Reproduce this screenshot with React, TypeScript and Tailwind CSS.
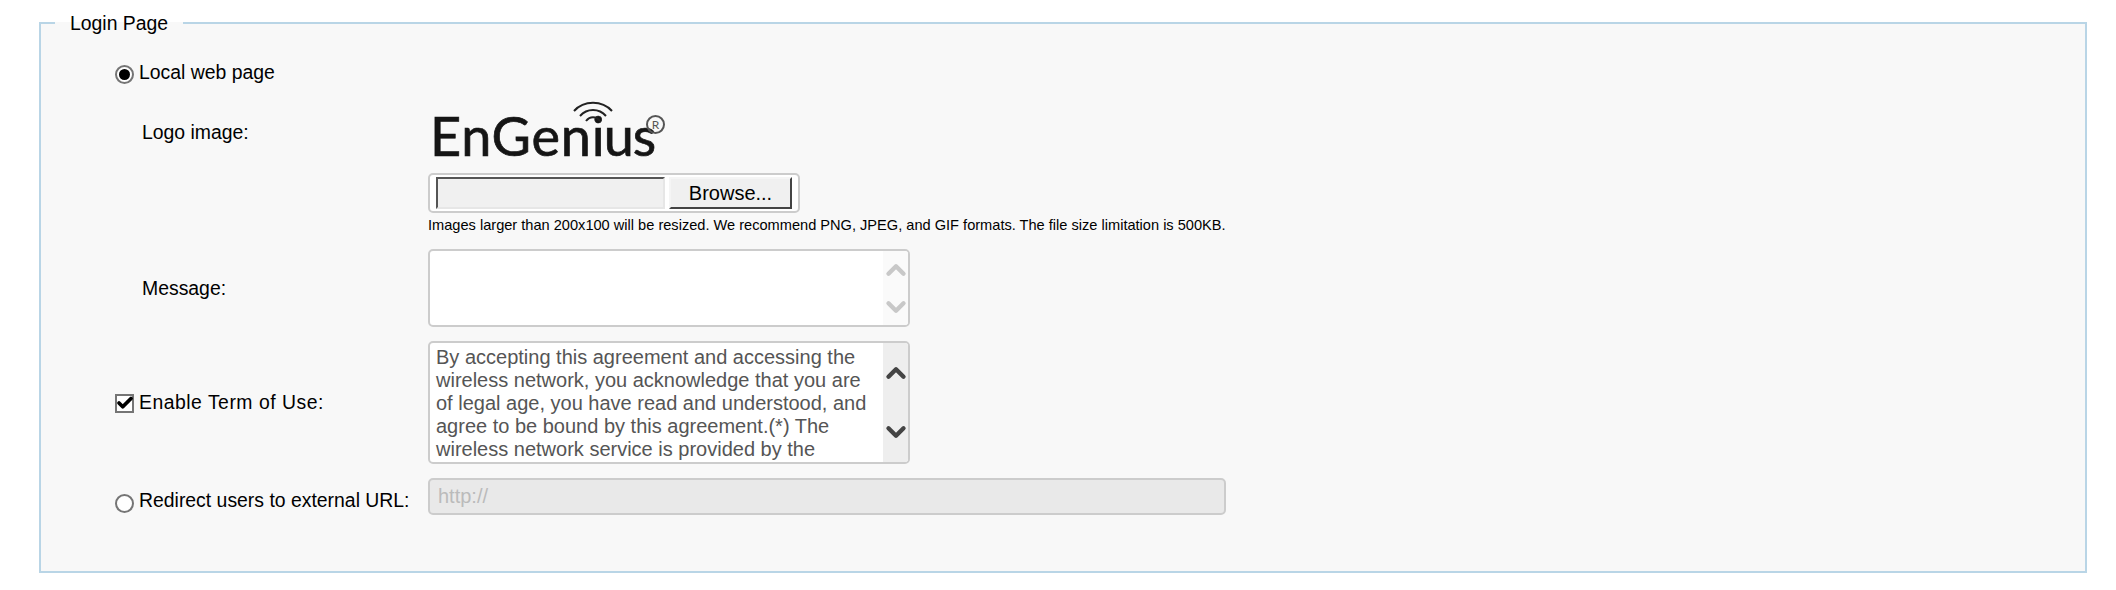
import { FiCheck, FiChevronDown, FiChevronUp } from "react-icons/fi";

const termsText =
    "By accepting this agreement and accessing the wireless network, you acknowledge that you are of legal age, you have read and understood, and agree to be bound by this agreement.(*) The wireless network service is provided by the property owners and is completely at their discretion.";

// SMALL CONTROLS

function RadioMark({ checked }: { checked?: boolean }) {
    return (
        <span className="mt-[3px] flex h-[19px] w-[19px] shrink-0 items-center justify-center rounded-full border-2 border-[#757575] bg-white">
            {checked && <span className="h-[11px] w-[11px] rounded-full bg-black" />}
        </span>
    );
}

function ScrollTextarea({ value, height, active }: { value: string; height: string; active?: boolean }) {
    return (
        <div className={`flex w-[482px] overflow-hidden rounded-[5px] border-2 border-[#cccccc] bg-white ${height}`}>
            <textarea
                readOnly
                value={value}
                className="min-w-0 flex-1 resize-none overflow-hidden px-[6px] pb-0 pt-[3px] text-[20px] leading-[23px] text-[#555555] outline-none"
            />
            <div className={`flex w-[25px] flex-col items-center justify-around ${active ? "bg-[#eeeeee] text-[#444444]" : "bg-[#fafafa] text-[#c8c8c8]"}`}>
                <FiChevronUp className="text-[30px]" strokeWidth={3.5} />
                <FiChevronDown className="text-[30px]" strokeWidth={3.5} />
            </div>
        </div>
    );
}

function EnGeniusLogo() {
    return (
        <div className="relative mt-[11px] h-[66px] w-[240px] font-['Lato',sans-serif] text-[54px] leading-[66px] text-[#151515] [-webkit-text-stroke:0.7px_#151515]">
            <span className="absolute left-[2px] top-[3px] tracking-[0.8px]">
                EnGen<span className="tracking-[-1px]">ius</span>
            </span>
            <span className="absolute left-[218px] top-[15px] flex h-[19px] w-[19px] items-center justify-center rounded-full border-2 border-[#555555] text-[12px] leading-none tracking-normal text-[#555555] [-webkit-text-stroke:0px]">
                R
            </span>
            <svg className="absolute left-[144px] top-0" width="42" height="24" viewBox="0 0 42 24" fill="none" stroke="#222222" strokeWidth="2">
                <path d="M2 11 C12 0 30 0 40 11" />
                <path d="M8 16 C15 8 27 8 34 16" />
                <path d="M14 21 C18 16 24 16 28 21" />
            </svg>
        </div>
    );
}

// MAIN

export default function App() {
    return (
        <div className="h-[590px] w-[2116px] bg-white pl-[39px] pr-[29px] pt-[12px] font-['Liberation_Sans',Arial,sans-serif] text-[19.4px] text-black">
            <fieldset className="h-[561px] border-2 border-[#b9d5e6] bg-[#f8f8f8] pl-[74px]">
                <legend className="-ml-[60px] px-[15px] leading-[22px]">Login Page</legend>

                <label className="mt-[27px] flex h-[24px] items-center gap-[5px]">
                    <RadioMark checked />
                    <span>Local web page</span>
                </label>

                <div className="mt-[4px] grid grid-cols-[313px_1fr] items-center gap-y-[14px]">
                    <div className="self-start pl-[27px] pt-[29px]">Logo image:</div>
                    <div>
                        <EnGeniusLogo />
                        <div className="mt-[7px] flex h-[40px] w-[372px] items-center gap-[4px] rounded-[5px] border-2 border-[#cccccc] bg-white px-[6px]">
                            <input
                                readOnly
                                className="h-[32px] w-[229px] border-2 border-b-[#e6e6e6] border-l-[#555555] border-r-[#e6e6e6] border-t-[#555555] bg-[#f0f0f0]"
                            />
                            <button className="h-[32px] w-[123px] border-2 border-b-[#444444] border-l-[#f5f5f5] border-r-[#444444] border-t-[#f5f5f5] bg-[#f0f0f0] text-[20px] leading-none">
                                Browse...
                            </button>
                        </div>
                        <p className="mt-[3px] whitespace-nowrap text-[14.6px] leading-[19px]">
                            Images larger than 200x100 will be resized. We recommend PNG, JPEG, and GIF formats. The file size limitation is 500KB.
                        </p>
                    </div>

                    <div className="pl-[27px] pt-[2px]">Message:</div>
                    <ScrollTextarea value="" height="h-[78px]" />

                    <label className="flex items-center gap-[5px] tracking-[0.5px]">
                        <span className="relative mt-[2px] flex h-[19px] w-[19px] items-center justify-center border-2 border-[#757575] bg-white text-black">
                            <FiCheck className="absolute -top-[2px] left-[-1px] text-[18px]" strokeWidth={5} />
                        </span>
                        <span>Enable Term of Use:</span>
                    </label>
                    <ScrollTextarea value={termsText} height="h-[123px]" active />

                    <label className="mt-[10px] flex items-center gap-[5px]">
                        <RadioMark />
                        <span className="-mt-[2px]">Redirect users to external URL:</span>
                    </label>
                    <input
                        disabled
                        placeholder="http://"
                        className="h-[37px] w-[798px] rounded-[5px] border-2 border-[#cccccc] bg-[#e9e9e9] px-[8px] text-[20px] placeholder:text-[#bbbbbb]"
                    />
                </div>
            </fieldset>
        </div>
    );
}
